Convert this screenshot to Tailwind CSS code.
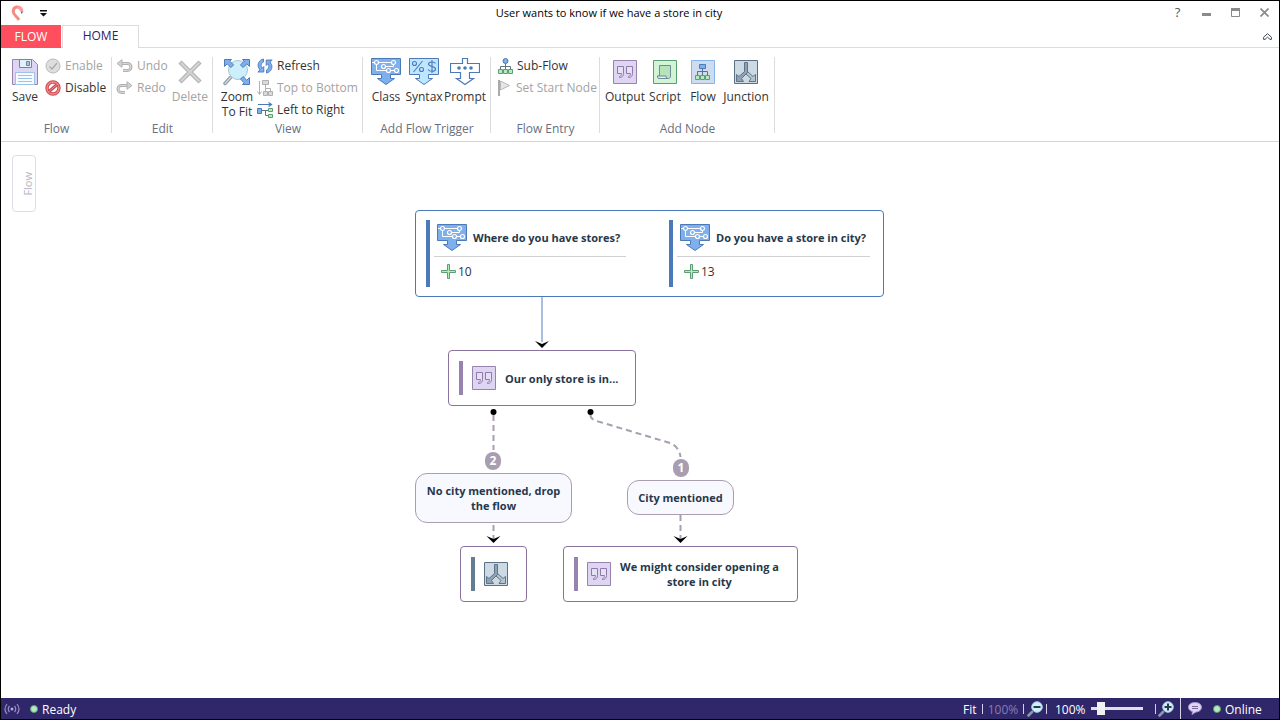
<!DOCTYPE html>
<html lang="en">
<head>
<meta charset="utf-8">
<meta name="viewport" content="width=device-width, initial-scale=1">
<title>User wants to know if we have a store in city</title>
<script src="https://cdn.jsdelivr.net/npm/@tailwindcss/browser@4"></script>
</head>
<body class="bg-white">
<svg class="hidden" aria-hidden="true">
  <symbol id="i-class" viewBox="0 0 30 27">
    <path d="M.5.5h29v16H19.500v4h4L15 26.500 6.500 20.500h4v-4H.500z" fill="#7fb0ee" stroke="#4c79b8"/>
    <path d="M1 4.500h21.500v4h-10M5.500 5v7.500h20" fill="none" stroke="#fff"/>
    <g fill="#7fb0ee" stroke="#fff" stroke-width="1.200"><circle cx="5.500" cy="4.500" r="2"/><circle cx="22.500" cy="4.500" r="2"/><circle cx="12.500" cy="8.500" r="2"/><circle cx="17.500" cy="12.500" r="2"/><circle cx="25.500" cy="12.500" r="2"/></g>
  </symbol>
  <symbol id="i-syntax" viewBox="0 0 30 27">
    <path d="M.5.5h29v16H19.500v4h4L15 26.500 6.500 20.500h4v-4H.500z" fill="#bfe6ff" stroke="#4c79b8"/>
    <g fill="none" stroke="#4c79b8" stroke-width="1.100"><circle cx="5.500" cy="5.500" r="2"/><circle cx="12.500" cy="11.500" r="2"/><path d="M13.500 3l-9 11M26.500 5.500c-1-2-7-2-7 .5 0 3 7 2 7 5 0 3-6 3-7.500.5M23 2v13"/></g>
  </symbol>
  <symbol id="i-prompt" viewBox="0 0 30 27">
    <path d="M12.500.5h5v5h12v9H19.500v6h4L15 26.500 6.500 20.500h4v-6H.500v-9h12z" fill="#fff" stroke="#4c79b8" stroke-width="1.200"/>
    <g fill="#4c79b8"><circle cx="9" cy="10" r="1.800"/><circle cx="15" cy="10" r="1.800"/><circle cx="21" cy="10" r="1.800"/></g>
  </symbol>
  <symbol id="i-quote" viewBox="0 0 24 24">
    <path d="M.5.5h23v23H.5z" fill="#ddd5f1" stroke="#9882ae"/>
    <g fill="#e6e0f5" stroke="#9078aa"><path d="M4.500 6.500h6v7c0 2.500-1.500 4-4 4v-1c1.500-.5 2-1.500 2-3h-4z"/><path d="M13.500 6.500h6v7c0 2.500-1.500 4-4 4v-1c1.500-.5 2-1.500 2-3h-4z"/></g>
  </symbol>
  <symbol id="i-script" viewBox="0 0 24 24">
    <path d="M.5.5h23v23H.5z" fill="#d3f3d5" stroke="#5c9e73"/>
    <path d="M6.500 5.500h11v10.500c0 1-.5 2.500-2 2.500H6c-1.500 0-1.500-2.500-1.500-2.500h2z" fill="#b5e3ba" stroke="#71899a"/>
    <path d="M4.500 16h8.500c0 1.500.5 2.500 2 2.500H6c-1 0-1.500-1-1.500-2.500z" fill="#dcf7dd" stroke="#71899a"/>
  </symbol>
  <symbol id="i-flow" viewBox="0 0 24 24">
    <path d="M.5.5h23v23H.5z" fill="#cfdcf0" stroke="#84b3ee"/>
    <path d="M11.500 8v7M6.500 15.500v-4h10v4" fill="none" stroke="#5a7186"/>
    <path d="M8.500 4.500h6v4h-6z" fill="#7fb0ee" stroke="#4c79b8"/>
    <path d="M4.500 15.500h4v4h-4zM9.500 15.500h4v4h-4zM14.500 15.500h4v4h-4z" fill="#b9eabd" stroke="#5c9e73"/>
  </symbol>
  <symbol id="i-junction" viewBox="0 0 24 24">
    <path d="M.5.5h23v23H.5z" fill="#ccdae3" stroke="#5b7084"/>
    <path d="M12 14l5 4.500-2 3h6.500v-7l-2.500 2-5.500-5z" fill="#b5c4ce" stroke="#5f7489"/>
    <path d="M10.500 2.500h3v10L7.500 18.500l2 3H2.500v-7l2.500 2 5.500-5z" fill="#8fa2b3" stroke="#5f7489"/>
  </symbol>
  <symbol id="i-plus" viewBox="0 0 15 15">
    <path d="M6.500.5h2v6h6v2h-6v6h-2v-6h-6v-2h6z" fill="#b9eabd" stroke="#5c9e73"/>
  </symbol>
</svg>

<div class="flex h-screen flex-col border border-black bg-white font-['Open_Sans','Noto_Sans',sans-serif] text-xs text-[#333]">
  <header class="flex h-6 shrink-0 items-center">
    <div class="flex w-[54px] items-center gap-[15px] pl-2">
      <svg class="size-4" viewBox="0 0 16 16" aria-hidden="true"><path d="M12 4.500C10.500.8 4.300 1 4.300 6.500c0 4 3.700 4.500 5.700 8.500" fill="none" stroke="#f58b83" stroke-width="3"/><path d="M8.500 1.500c2-.8 4.500 0 5.500 2.500l.3 2.500H11c0-1.500-.8-2.500-2.500-2.500z" fill="#f79f98"/><path d="M11.800 6.500h2.500L12.500 9z" fill="#666"/></svg>
      <button aria-label="Customize quick access"><svg class="h-[7px] w-[7px]" viewBox="0 0 7 7"><path d="M0 0h7v1.500H0zM0 3h7L3.500 6.500z" fill="#111"/></svg></button>
    </div>
    <h1 class="flex-1 text-center text-[11px] text-black">User wants to know if we have a store in city</h1>
    <div class="flex text-[#8a8a8a]">
      <button class="w-[29px] text-center text-[13px] text-[#555]" aria-label="Help">?</button>
      <button class="flex w-[29px] items-center justify-center" aria-label="Minimize"><svg width="9" height="9" viewBox="0 0 9 9"><path d="M0 5h9v3H0z" fill="#8a8a8a"/></svg></button>
      <button class="flex w-[29px] items-center justify-center" aria-label="Maximize"><svg width="9" height="9" viewBox="0 0 9 9"><path d="M.5.5h8v8h-8z" fill="none" stroke="#8a8a8a"/><path d="M0 0h9v3H0z" fill="#8a8a8a"/></svg></button>
      <button class="flex w-[29px] items-center justify-center" aria-label="Close"><svg width="9" height="9" viewBox="0 0 9 9"><path d="M.5.5l8 8M8.500.5l-8 8" stroke="#8a8a8a" stroke-width="1.700"/></svg></button>
    </div>
  </header>

  <nav class="flex h-[23px] shrink-0">
    <button class="w-[60px] bg-[#ff4f5e] text-white">FLOW</button>
    <div class="w-px border-b border-[#dcdcdc]"></div>
    <button class="w-[77px] border-x border-t border-[#dcdcdc] pb-[3px] text-[#2b2268]">HOME</button>
    <div class="flex flex-1 items-center justify-end border-b border-[#dcdcdc] pr-[7px]">
      <button aria-label="Collapse ribbon"><svg width="9" height="7" viewBox="0 0 9 7"><path d="M.6 4.200L4.500.7l3.900 3.500v2.200H7L4.500 4.200 2 6.400H.6z" fill="none" stroke="#444b58"/></svg></button>
    </div>
  </nav>

  <div class="flex h-[94px] shrink-0 border-b border-[#d5d5d5] pt-[6px]" role="toolbar">
    <section class="relative flex w-[111px] flex-col">
      <div class="flex h-[66px] pl-2">
        <button class="flex w-8 flex-col items-center leading-[15px]"><span class="flex h-[35px] items-center"><svg width="26" height="26" viewBox="0 0 26 26" aria-hidden="true"><path d="M.5.5h20l5 5v20H.500z" fill="#ddd5f1" stroke="#9882ae"/><path d="M7.500.5h12v8h-12z" fill="#dff1fb" stroke="#71869a"/><path d="M14.500 2.500h3v4h-3z" fill="#c4b5dd" stroke="#71869a"/><path d="M3.500 13.500h19v12h-19z" fill="#f5fbff" stroke="#9dc4e8"/><path d="M6 16.500h14M6 19.500h14M6 22.500h14" stroke="#9dc4e8"/></svg></span>Save</button>
        <div class="ml-1 flex flex-col pt-px">
          <button class="flex h-[22px] items-center gap-1 text-[#a3a3a3]" disabled><svg width="16" height="16" viewBox="0 0 16 16" aria-hidden="true"><circle cx="8" cy="8" r="7" fill="#dedede" stroke="#b9b9b9"/><path d="M4.500 8.500l2.500 2.500 5-6" fill="none" stroke="#a8a8a8" stroke-width="1.200"/></svg>Enable</button>
          <button class="flex h-[22px] items-center gap-1"><svg width="16" height="16" viewBox="0 0 16 16" aria-hidden="true"><circle cx="8" cy="8" r="6" fill="#fff" stroke="#cb4b51" stroke-width="3.400"/><circle cx="8" cy="8" r="6" fill="none" stroke="#f08a8c" stroke-width="1.400"/><path d="M4 11.500l8-7" stroke="#cb4b51" stroke-width="3"/><path d="M4 11.500l8-7" stroke="#f08a8c" stroke-width="1"/></svg>Disable</button>
        </div>
      </div>
      <h2 class="text-center leading-[18px] text-[#68707f]">Flow</h2>
      <span class="absolute right-0 top-[3px] h-[76px] w-px bg-[#dcdcdc]"></span>
    </section>

    <section class="relative flex w-[101px] flex-col">
      <div class="flex h-[66px] justify-between pl-1 pr-[5px] text-[#a3a3a3]">
        <div class="flex flex-col pt-px">
          <button class="flex h-[22px] items-center gap-1" disabled><svg width="17" height="14" viewBox="0 0 17 14" aria-hidden="true"><path d="M4 4.500h7.500a3.500 3.500 0 010 7H7" fill="none" stroke="#b2b2b2" stroke-width="3"/><path d="M4 4.500h7.500a3.500 3.500 0 010 7H7" fill="none" stroke="#dadada"/><path d="M6 .7v7.600L1 4.500z" fill="#d2d2d2" stroke="#b2b2b2"/></svg>Undo</button>
          <button class="flex h-[22px] items-center gap-1" disabled><svg width="17" height="14" viewBox="0 0 17 14" aria-hidden="true"><path d="M12 4.500H5.500a3.500 3.500 0 000 7H9" fill="none" stroke="#b2b2b2" stroke-width="3"/><path d="M12 4.500H5.500a3.500 3.500 0 000 7H9" fill="none" stroke="#dadada"/><path d="M11 .7v7.600l5-3.800z" fill="#d2d2d2" stroke="#b2b2b2"/></svg>Redo</button>
        </div>
        <button class="flex flex-col items-center leading-[15px]" disabled><span class="flex h-[35px] items-center"><svg width="24" height="24" viewBox="0 0 24 24" aria-hidden="true"><path d="M2 2l20 20M22 2L2 22" stroke="#b0b0b0" stroke-width="4.400"/><path d="M2.700 2.700l18.600 18.600M21.300 2.700L2.700 21.300" stroke="#d2d2d2" stroke-width="2.400"/></svg></span>Delete</button>
      </div>
      <h2 class="text-center leading-[18px] text-[#68707f]">Edit</h2>
      <span class="absolute right-0 top-[3px] h-[76px] w-px bg-[#dcdcdc]"></span>
    </section>

    <section class="relative flex w-[150px] flex-col">
      <div class="flex h-[66px] pl-1">
        <button class="flex w-10 flex-col items-center leading-[15px]"><span class="flex h-[35px] items-center"><svg width="28" height="28" viewBox="0 0 28 28" aria-hidden="true"><path d="M8 19l-6 6.500" stroke="#8b98a6" stroke-width="3.400" stroke-linecap="round"/><path d="M8 19l-6 6.500" stroke="#d5dbe0" stroke-width="1.200" stroke-linecap="round"/><circle cx="15" cy="12" r="9.500" fill="#cdeefb" stroke="#a9c4d2"/><g fill="#7fb0ee" stroke="#4c79b8"><path d="M1.500 1.500h7L6.800 3.200l3.700 3.700-2.600 2.600-3.700-3.700-2.700 2.700z"/><path d="M26.500 1.500h-7l1.700 1.700-3.700 3.700 2.600 2.600 3.700-3.700 2.700 2.700z"/><path d="M26.500 26.500h-7l1.700-1.700-3.700-3.700 2.600-2.600 3.700 3.700 2.700-2.700z"/></g></svg></span><span>Zoom<br>To Fit</span></button>
        <div class="flex flex-col pt-px">
          <button class="flex h-[22px] shrink-0 items-center gap-1"><svg width="16" height="16" viewBox="0 0 16 16" aria-hidden="true"><g fill="#7fb0ee" stroke="#4c79b8" stroke-width=".9"><path d="M6.500 1C2 2 .2 6 1.500 9.500L3 12 .8 14h6V8.500L5 10.300C3.500 8 4 5 6.500 4z"/><path d="M9.500 15c4.500-1 6.300-5 5-8.500L13 4l2.200-2h-6v5.500L11 5.700c1.500 2.300 1 5.300-1.500 6.300z"/></g></svg>Refresh</button>
          <button class="flex h-[22px] shrink-0 items-center gap-1 text-[#a3a3a3]" disabled><svg width="16" height="16" viewBox="0 0 16 16" aria-hidden="true"><g fill="#dadada" stroke="#b0b0b0"><path d="M5.500.5h6v4h-6zM6.500 11.500h4v4h-4zM11.500 11.500h4v4h-4z"/><path d="M8.500 5v6M8.500 8.500h5V11M2.500 1v13M.5 11.500l2 3 2-3" fill="none"/></g></svg>Top to Bottom</button>
          <button class="flex h-[22px] shrink-0 items-center gap-1"><svg width="16" height="16" viewBox="0 0 16 16" aria-hidden="true"><path d="M1 2.500h13M11.500.5l3 2-3 2" fill="none" stroke="#4c79b8" stroke-width="1.200"/><path d="M5 8.500h6M8.500 8.500v5H11" fill="none" stroke="#607487"/><path d="M.5 6.500h4v5h-4z" fill="#7fb0ee" stroke="#4c79b8"/><path d="M11.500 6.500h4v3h-4zM11.500 12.500h4v3h-4z" fill="#b9eabd" stroke="#5c9e73"/></svg>Left to Right</button>
        </div>
      </div>
      <h2 class="text-center leading-[18px] text-[#68707f]">View</h2>
      <span class="absolute right-0 top-[3px] h-[76px] w-px bg-[#dcdcdc]"></span>
    </section>

    <section class="relative flex w-[128px] flex-col">
      <div class="flex h-[66px] pl-1">
        <button class="flex w-[38px] flex-col items-center leading-[15px]"><span class="flex h-[35px] items-center"><svg width="30" height="27"><use href="#i-class"/></svg></span>Class</button>
        <button class="flex w-[38px] flex-col items-center leading-[15px]"><span class="flex h-[35px] items-center"><svg width="30" height="27"><use href="#i-syntax"/></svg></span>Syntax</button>
        <button class="flex w-[44px] flex-col items-center leading-[15px]"><span class="flex h-[35px] items-center"><svg width="30" height="27"><use href="#i-prompt"/></svg></span>Prompt</button>
      </div>
      <h2 class="text-center leading-[18px] text-[#68707f]">Add Flow Trigger</h2>
      <span class="absolute right-0 top-[3px] h-[76px] w-px bg-[#dcdcdc]"></span>
    </section>

    <section class="relative flex w-[109px] flex-col">
      <div class="flex h-[66px] flex-col items-start whitespace-nowrap pl-[7px] pt-px">
        <button class="flex h-[22px] items-center gap-1"><svg width="15" height="16" viewBox="0 0 15 16" aria-hidden="true"><path d="M7.500 5v6M2.500 11V8.500h10V11" fill="none" stroke="#607487"/><circle cx="7.500" cy="3" r="2.500" fill="#7fb0ee" stroke="#4c79b8"/><path d="M.5 11.500h4v4h-4zM5.500 11.500h4v4h-4zM10.500 11.500h4v4h-4z" fill="#b9eabd" stroke="#5c9e73"/></svg>Sub-Flow</button>
        <button class="flex h-[22px] items-center gap-1 text-[#a3a3a3]" disabled><svg width="14" height="16" viewBox="0 0 14 16" aria-hidden="true"><path d="M1 0v16" stroke="#aaa" stroke-width="2"/><path d="M2.500 1l9 4.500-9 4.500z" fill="#e6e6e6" stroke="#b8b8b8"/></svg>Set Start Node</button>
      </div>
      <h2 class="text-center leading-[18px] text-[#68707f]">Flow Entry</h2>
      <span class="absolute right-0 top-[3px] h-[76px] w-px bg-[#dcdcdc]"></span>
    </section>

    <section class="relative flex w-[175px] flex-col">
      <div class="flex h-[66px] pl-[5px]">
        <button class="flex w-10 flex-col items-center leading-[15px]"><span class="flex h-[35px] items-center"><svg width="24" height="24"><use href="#i-quote"/></svg></span>Output</button>
        <button class="flex w-10 flex-col items-center leading-[15px]"><span class="flex h-[35px] items-center"><svg width="24" height="24"><use href="#i-script"/></svg></span>Script</button>
        <button class="flex w-9 flex-col items-center leading-[15px]"><span class="flex h-[35px] items-center"><svg width="24" height="24"><use href="#i-flow"/></svg></span>Flow</button>
        <button class="flex w-[50px] flex-col items-center leading-[15px]"><span class="flex h-[35px] items-center"><svg width="24" height="24"><use href="#i-junction"/></svg></span>Junction</button>
      </div>
      <h2 class="text-center leading-[18px] text-[#68707f]">Add Node</h2>
      <span class="absolute right-0 top-[3px] h-[76px] w-px bg-[#dcdcdc]"></span>
    </section>
  </div>

  <main class="relative min-h-0 flex-1 overflow-hidden text-[11px] font-bold leading-[15px] text-[#26384a]">
    <button class="absolute left-[11px] top-[13px] flex h-[57px] w-6 items-center gap-1 rounded border border-[#dedce6] pl-[3px] font-normal text-[#b9b5c5]"><span class="h-[47px] w-[2px] bg-[#dad8ec]"></span><span class="rotate-180 [writing-mode:vertical-rl]">Flow</span></button>

    <svg class="absolute left-0 top-0" width="900" height="480" aria-hidden="true">
      <path d="M541 155v45" stroke="#a9bfdf" stroke-width="2"/>
      <g fill="none" stroke="#a99db0" stroke-width="2" stroke-dasharray="6 4">
        <path d="M492.500 273v35"/>
        <path d="M589.500 273C589.500 277 592 278 599 280L669 301C675 303 679 309 679.500 315"/>
        <path d="M492.500 383v15"/>
        <path d="M679.500 373v25"/>
      </g>
      <circle cx="492.500" cy="270" r="3"/><circle cx="589.500" cy="270" r="3"/>
      <path d="M534 199l7 3 7-3-7 7zM485.500 394l7 3 7-3-7 7zM672.500 394l7 3 7-3-7 7z"/>
    </svg>

    <article class="absolute left-[414px] top-[68px] flex w-[469px] gap-[43px] rounded border border-[#4c79b8] bg-white px-[10px] py-[9px]">
      <div class="flex h-[67px] w-[200px] shrink-0 gap-1">
        <span class="w-1 shrink-0 bg-[#4c79b8]"></span>
        <div class="min-w-0 flex-1">
          <div class="flex h-[37px] items-center gap-[6px] whitespace-nowrap border-b border-[#d0d0d0] pb-[2px] pl-[3px]"><svg class="shrink-0" width="30" height="27"><use href="#i-class"/></svg>Where do you have stores?</div>
          <div class="flex h-[29px] items-center gap-[2px] pl-[7px] text-xs font-normal text-[#333]"><svg width="15" height="15"><use href="#i-plus"/></svg>10</div>
        </div>
      </div>
      <div class="flex h-[67px] w-[201px] shrink-0 gap-1">
        <span class="w-1 shrink-0 bg-[#4c79b8]"></span>
        <div class="min-w-0 flex-1">
          <div class="flex h-[37px] items-center gap-[6px] whitespace-nowrap border-b border-[#d0d0d0] pb-[2px] pl-[3px]"><svg class="shrink-0" width="30" height="27"><use href="#i-class"/></svg>Do you have a store in city?</div>
          <div class="flex h-[29px] items-center gap-[2px] pl-[7px] text-xs font-normal text-[#333]"><svg width="15" height="15"><use href="#i-plus"/></svg>13</div>
        </div>
      </div>
    </article>

    <article class="absolute left-[447px] top-[208px] flex h-[56px] w-[188px] items-center whitespace-nowrap rounded border border-[#8a729f] bg-white pl-[10px]">
      <span class="h-[34px] w-1 bg-[#9882ae]"></span><svg class="ml-[9px] mr-[9px] shrink-0" width="24" height="24"><use href="#i-quote"/></svg>Our only store is in...
    </article>

    <span class="absolute left-[484px] top-[310px] flex h-[18px] w-4 items-center justify-center rounded-full bg-[#a99db0] text-xs text-white">2</span>
    <span class="absolute left-[672px] top-[317px] flex h-[18px] w-4 items-center justify-center rounded-full bg-[#a99db0] text-xs text-white">1</span>
    <div class="absolute left-[414px] top-[331px] flex h-[50px] w-[157px] items-center justify-center whitespace-nowrap rounded-xl border border-[#a99db0] bg-[#f8f9ff] text-center"><span>No city mentioned, drop<br>the flow</span></div>
    <div class="absolute left-[626px] top-[338px] flex h-[35px] w-[107px] items-center justify-center whitespace-nowrap rounded-xl border border-[#a99db0] bg-[#f8f9ff]">City mentioned</div>

    <article class="absolute left-[459px] top-[404px] flex h-[56px] w-[67px] items-center rounded border border-[#8a729f] bg-white pl-[10px]">
      <span class="h-[34px] w-1 bg-[#647d91]"></span><svg class="ml-[9px] shrink-0" width="24" height="24"><use href="#i-junction"/></svg>
    </article>
    <article class="absolute left-[562px] top-[404px] flex h-[56px] w-[235px] items-center whitespace-nowrap rounded border border-[#8a729f] bg-white pl-[10px]">
      <span class="h-[34px] w-1 bg-[#9882ae]"></span><svg class="ml-[9px] mr-[9px] shrink-0" width="24" height="24"><use href="#i-quote"/></svg><span class="text-center">We might consider opening a<br>store in city</span>
    </article>
  </main>

  <footer class="flex h-[21px] shrink-0 items-center bg-[#30276b] text-white">
    <svg class="ml-[3px]" width="16" height="14" viewBox="0 0 16 14" aria-hidden="true"><g fill="none" stroke="#9a8fc0" stroke-width="1.200"><path d="M3 2Q-1 7 3 12M5.500 4Q3 7 5.500 10M13 2q4 5 0 10M10.500 4q2.500 3 0 6"/></g><circle cx="8" cy="7" r="1.500" fill="#b9a9d5"/></svg>
    <span class="ml-[10px] size-2 rounded-full border border-[#5c9e73] bg-[#b9eabd]"></span>
    <span class="ml-1 pt-[2px]">Ready</span>
    <div class="ml-auto flex h-full items-center">
      <button class="w-[19px] pt-[2px] text-left">Fit</button>
      <span class="h-[10px] w-px bg-[#d5d0e5]"></span>
      <button class="w-10 pt-[2px] text-center text-[#857db0]" disabled>100%</button>
      <span class="h-[10px] w-px bg-[#d5d0e5]"></span>
      <button class="ml-[3px]" aria-label="Zoom out"><svg width="16" height="16" viewBox="0 0 16 16"><path d="M5 11l-3.500 3.500" stroke="#8b98a6" stroke-width="2.600" stroke-linecap="round"/><circle cx="10" cy="6" r="5.300" fill="#cdeefb" stroke="#a8cfe2"/><path d="M6.500 6h7" stroke="#2d3a48" stroke-width="2"/></svg></button>
      <span class="ml-[3px] h-[10px] w-px bg-[#d5d0e5]"></span>
      <output class="ml-2 w-9 pt-[2px]">100%</output>
      <input type="range" min="0" max="100" value="14" aria-label="Zoom level" class="h-3 w-[52px] appearance-none bg-transparent [&::-webkit-slider-runnable-track]:h-[3px] [&::-webkit-slider-runnable-track]:bg-[#dfdfe6] [&::-webkit-slider-thumb]:-mt-[5px] [&::-webkit-slider-thumb]:h-[13px] [&::-webkit-slider-thumb]:w-2 [&::-webkit-slider-thumb]:appearance-none [&::-webkit-slider-thumb]:bg-[#f0f0f0]">
      <span class="ml-3 h-[10px] w-px bg-[#d5d0e5]"></span>
      <button class="ml-[2px]" aria-label="Zoom in"><svg width="16" height="16" viewBox="0 0 16 16"><path d="M5 11l-3.500 3.500" stroke="#8b98a6" stroke-width="2.600" stroke-linecap="round"/><circle cx="10" cy="6" r="5.300" fill="#cdeefb" stroke="#a8cfe2"/><path d="M6.500 6h7M10 2.500v7" stroke="#2d3a48" stroke-width="2"/></svg></button>
      <span class="ml-[6px] h-full w-px bg-[#d5d0e5]"></span>
      <button class="ml-[7px]" aria-label="Messages"><svg width="14" height="13" viewBox="0 0 14 13"><path d="M7 .5c4 0 6.500 2 6.500 4.700S11 10 8 10l-4 2.500.5-3C2 9 .5 7.500.5 5.200.5 2.500 3 .5 7 .5z" fill="#ddd5f1" stroke="#a792c4"/><path d="M4 4.500h6M4 6.500h6" stroke="#7d66a0"/></svg></button>
      <span class="ml-[11px] size-2 rounded-full border border-[#5c9e73] bg-[#b9eabd]"></span>
      <span class="ml-1 w-[54px] pt-[2px]">Online</span>
    </div>
  </footer>
</div>
</body>
</html>
